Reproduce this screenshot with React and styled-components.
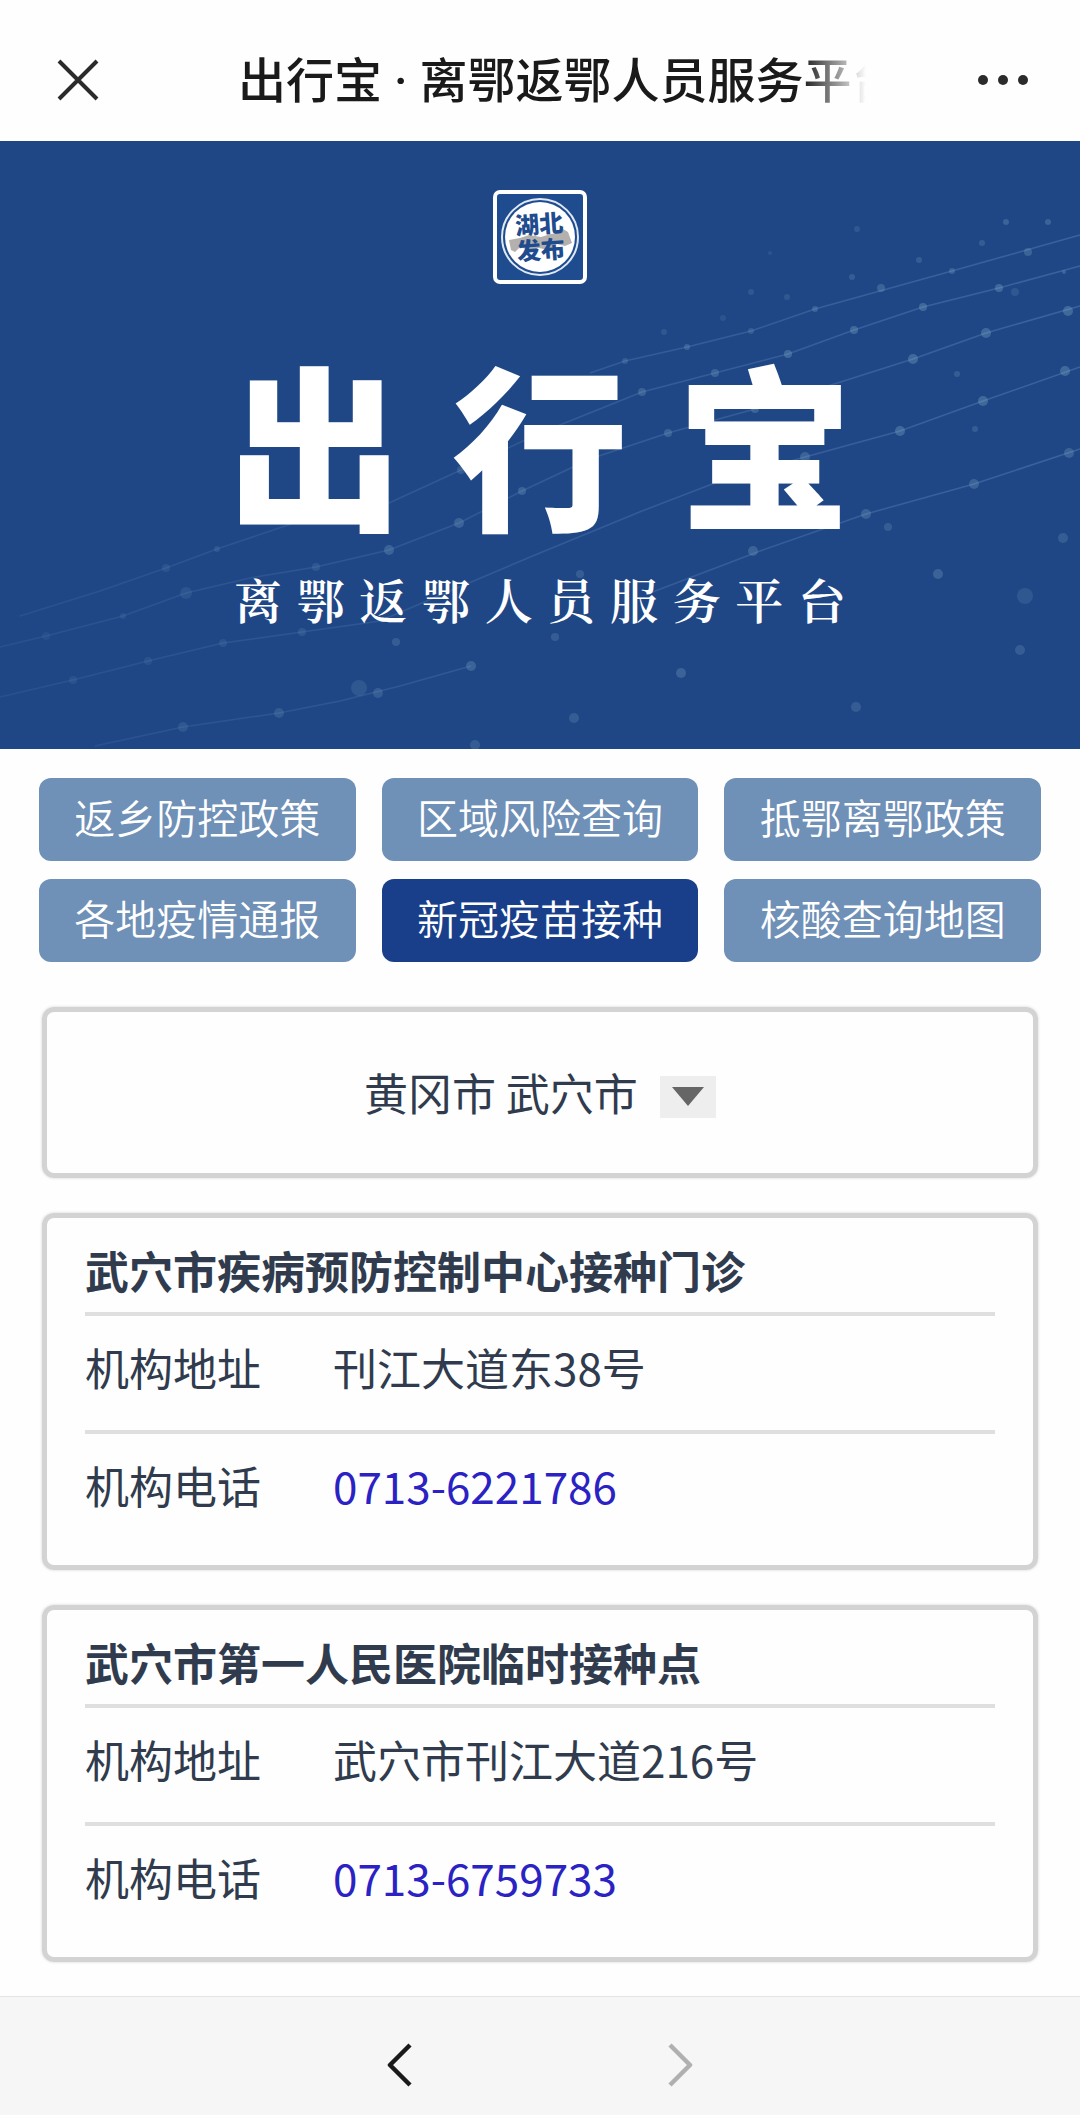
import { useState } from 'react';
import styled, { createGlobalStyle } from 'styled-components';

const menuItems = [
  '返乡防控政策',
  '区域风险查询',
  '抵鄂离鄂政策',
  '各地疫情通报',
  '新冠疫苗接种',
  '核酸查询地图',
];

const areas = ['黄冈市 武穴市', '黄冈市 黄州区', '黄冈市 麻城市'];

const clinics = [
  {
    name: '武穴市疾病预防控制中心接种门诊',
    address: '刊江大道东38号',
    phone: '0713-6221786',
  },
  {
    name: '武穴市第一人民医院临时接种点',
    address: '武穴市刊江大道216号',
    phone: '0713-6759733',
  },
];

export default function App() {
  const [selected, setSelected] = useState('新冠疫苗接种');
  const [area, setArea] = useState(areas[0]);

  return (
    <>
      <GlobalStyle />
      <Header>
        <IconButton type="button" aria-label="关闭">
          <CloseIcon />
        </IconButton>
        <PageTitle>出行宝 · 离鄂返鄂人员服务平台</PageTitle>
        <IconButton type="button" aria-label="更多">
          <MoreIcon />
        </IconButton>
      </Header>

      <main>
        <Banner>
          <Network />
          <Logo />
          <BannerTitle>出行宝</BannerTitle>
          <BannerSubtitle>离鄂返鄂人员服务平台</BannerSubtitle>
        </Banner>

        <Menu>
          {menuItems.map((item) => (
            <MenuButton
              key={item}
              type="button"
              $active={item === selected}
              onClick={() => setSelected(item)}
            >
              {item}
            </MenuButton>
          ))}
        </Menu>

        <CardList>
          <AreaCard>
            <AreaSelect
              id="area"
              aria-label="选择地区"
              value={area}
              onChange={(event) => setArea(event.target.value)}
            >
              {areas.map((name) => (
                <option key={name}>{name}</option>
              ))}
            </AreaSelect>
            <AreaArrow htmlFor="area">
              <svg width="32" height="20" viewBox="0 0 32 20" aria-hidden="true">
                <path d="M0 0H32L16 19Z" fill="#666" />
              </svg>
            </AreaArrow>
          </AreaCard>

          {clinics.map((clinic) => (
            <ClinicCard key={clinic.name} {...clinic} />
          ))}
        </CardList>
      </main>

      <BottomBar>
        <NavButton type="button" aria-label="后退">
          <ChevronIcon d="M23 3L3 23L23 43" />
        </NavButton>
        <NavButton type="button" aria-label="前进" disabled>
          <ChevronIcon d="M3 3L23 23L3 43" />
        </NavButton>
      </BottomBar>
    </>
  );
}

function ClinicCard({ name, address, phone }) {
  return (
    <Card>
      <ClinicName>{name}</ClinicName>
      <Details>
        <Row>
          <dt>机构地址</dt>
          <dd>{address}</dd>
        </Row>
        <Row>
          <dt>机构电话</dt>
          <dd>
            <a href={`tel:${phone}`}>{phone}</a>
          </dd>
        </Row>
      </Details>
    </Card>
  );
}

function CloseIcon() {
  return (
    <svg width="42" height="42" viewBox="0 0 42 42" aria-hidden="true">
      <path d="M2 2L40 40M40 2L2 40" fill="none" stroke="#2b2b2b" strokeWidth="4" />
    </svg>
  );
}

function MoreIcon() {
  return (
    <svg width="50" height="12" viewBox="0 0 50 12" fill="#2b2b2b" aria-hidden="true">
      <circle cx="5" cy="6" r="5" />
      <circle cx="25" cy="6" r="5" />
      <circle cx="45" cy="6" r="5" />
    </svg>
  );
}

function ChevronIcon({ d }) {
  return (
    <svg width="26" height="46" viewBox="0 0 26 46" aria-hidden="true">
      <path d={d} fill="none" stroke="currentColor" strokeWidth="4.5" strokeLinejoin="round" />
    </svg>
  );
}

function Logo() {
  return (
    <LogoSvg viewBox="0 0 94 94" role="img" aria-label="湖北发布">
      <rect x="2" y="2" width="90" height="90" rx="5" fill="#1f4c8e" stroke="#fff" strokeWidth="4" />
      <circle cx="47" cy="47" r="38" fill="none" stroke="#dfe8f5" strokeWidth="2" />
      <circle cx="47" cy="47" r="35" fill="#fff" />
      <path
        d="M16 50L27 48L36 45L48 47L58 44L66 43L70 39L75 42L79 53L72 56L64 54L56 60L46 58L36 60L27 57L22 62L18 60Z"
        fill="#b3b0ad"
      />
      <g fill="#1f4c8e" fontSize="24" fontWeight="900" textAnchor="middle" transform="rotate(-4 47 47)">
        <text x="47" y="43">湖北</text>
        <text x="47" y="69">发布</text>
      </g>
    </LogoSvg>
  );
}

const networkLines = [
  '0,506 46,495 123,475 186,452 250,437 316,426 389,409 459,382 522,350 590,318 668,292 755,268 850,238 913,218 986,192 1080,165',
  '389,362 461,329 540,292 642,251 715,232 788,213 854,189 923,166 999,147 1080,125',
  '0,556 73,539 148,520 223,502 302,491 380,480 450,450 535,414 642,370 720,340 805,316 900,290 983,260 1080,226',
  '95,605 183,586 279,572 340,560 400,545 471,525',
  '650,452 760,410 866,373 974,343 1080,308',
  '20,475 100,450 166,427 217,408 300,380',
  '590,232 625,220 687,206 751,190 815,168 952,130 1080,94',
];

// [x, y, radius, opacity]
const networkDots = [
  [1068, 170, 5, 0.3], [986, 192, 5, 0.3], [913, 218, 5, 0.3], [999, 147, 4, 0.3],
  [923, 166, 4, 0.3], [854, 189, 4, 0.3], [788, 213, 4, 0.3], [715, 232, 4, 0.25],
  [642, 251, 4, 0.25], [1065, 230, 5, 0.3], [983, 260, 5, 0.3], [900, 290, 5, 0.3],
  [805, 316, 5, 0.25], [668, 292, 4, 0.25], [755, 268, 4, 0.25], [1069, 312, 5, 0.25],
  [974, 343, 5, 0.25], [866, 373, 5, 0.25], [888, 386, 4, 0.2], [1063, 397, 5, 0.2],
  [938, 433, 5, 0.25], [1025, 455, 8, 0.15], [1020, 509, 5, 0.2], [856, 566, 5, 0.2],
  [753, 410, 5, 0.25], [681, 532, 5, 0.25], [574, 577, 5, 0.2], [580, 433, 4, 0.2],
  [952, 130, 3, 0.25], [1028, 111, 4, 0.25], [1048, 81, 3, 0.25], [815, 168, 3, 0.25],
  [881, 147, 4, 0.25], [751, 190, 3, 0.2], [687, 206, 3, 0.25], [625, 220, 3, 0.2],
  [664, 191, 3, 0.15], [957, 233, 3, 0.2], [975, 288, 3, 0.2], [555, 496, 4, 0.2],
  [852, 136, 3, 0.2], [1015, 151, 4, 0.15], [1064, 131, 2, 0.25], [1006, 81, 3, 0.25],
  [982, 102, 3, 0.2], [919, 119, 3, 0.2], [857, 88, 3, 0.15], [770, 112, 2, 0.12],
  [751, 151, 3, 0.15], [787, 156, 3, 0.15], [723, 177, 3, 0.12], [461, 329, 4, 0.2],
  [459, 382, 5, 0.25], [389, 409, 5, 0.25], [316, 426, 4, 0.15], [217, 408, 3, 0.15],
  [166, 427, 4, 0.12], [186, 452, 6, 0.12], [123, 475, 3, 0.1], [46, 495, 4, 0.08],
  [302, 491, 4, 0.15], [223, 502, 4, 0.12], [148, 520, 4, 0.1], [73, 539, 4, 0.1],
  [396, 501, 4, 0.2], [471, 525, 5, 0.25], [359, 547, 8, 0.15], [378, 552, 5, 0.2],
  [279, 572, 5, 0.18], [183, 586, 5, 0.15], [475, 604, 5, 0.2], [522, 350, 4, 0.25],
];

function Network() {
  return (
    <NetworkSvg viewBox="0 0 1080 608" preserveAspectRatio="xMidYMid slice" aria-hidden="true">
      <defs>
        <linearGradient id="line" gradientUnits="userSpaceOnUse" x1="0" y1="0" x2="1080" y2="0">
          <stop offset="0" stopColor="#7fa8d8" stopOpacity="0.1" />
          <stop offset="1" stopColor="#7fa8d8" stopOpacity="0.28" />
        </linearGradient>
      </defs>
      {networkLines.map((points) => (
        <polyline key={points} points={points} fill="none" stroke="url(#line)" strokeWidth="1.5" />
      ))}
      {networkDots.map(([x, y, r, opacity]) => (
        <circle key={`${x}-${y}`} cx={x} cy={y} r={r} fill="#8fb8cc" opacity={opacity} />
      ))}
    </NetworkSvg>
  );
}

const GlobalStyle = createGlobalStyle`
  * {
    box-sizing: border-box;
  }

  body {
    margin: 0;
    background-color: #fefefe;
    color: #303c4e;
    font-family: 'Noto Sans CJK SC', sans-serif;
  }

  button,
  select {
    font-family: inherit;
  }
`;

const Header = styled.header`
  display: flex;
  align-items: center;
  height: 141px;
  padding: 18px 52px 0 57px;
`;

const IconButton = styled.button`
  display: flex;
  padding: 0;
  border: none;
  background: none;
  cursor: pointer;
`;

const PageTitle = styled.div`
  flex: 1;
  min-width: 0;
  margin: 0 112px 0 139px;
  padding-top: 5px;
  overflow: hidden;
  white-space: nowrap;
  font-family: Roboto, 'Noto Sans CJK SC', sans-serif;
  font-size: 48px;
  font-weight: 500;
  line-height: 72px;
  color: #1a1a1a;
  mask-image: linear-gradient(to right, #000 calc(100% - 64px), transparent);
`;

const Banner = styled.section`
  position: relative;
  display: flex;
  flex-direction: column;
  align-items: center;
  padding: 49px 0 120px;
  background-color: #1f4786;
  color: #fff;
`;

const NetworkSvg = styled.svg`
  position: absolute;
  inset: 0;
  width: 100%;
  height: 100%;
`;

const LogoSvg = styled.svg`
  position: relative;
  width: 94px;
  height: 94px;
`;

const BannerTitle = styled.h1`
  position: relative;
  width: 626px;
  margin: 69px 0 0;
  font-size: 176px;
  font-weight: 900;
  line-height: 176px;
  text-align-last: justify;
`;

const BannerSubtitle = styled.p`
  position: relative;
  width: 612px;
  margin: 40px 0 0;
  font-family: 'Noto Serif CJK SC', 'Noto Sans CJK SC', serif;
  font-size: 48px;
  font-weight: 600;
  line-height: 60px;
  text-align-last: justify;
`;

const Menu = styled.nav`
  display: grid;
  grid-template-columns: repeat(3, 1fr);
  gap: 18px 26px;
  padding: 29px 39px 45px;
`;

const MenuButton = styled.button`
  height: 83px;
  padding: 0 0 7px;
  border: none;
  border-radius: 12px;
  background-color: ${(props) => (props.$active ? '#193f8a' : '#6f90b7')};
  color: #fff;
  font-size: 41px;
  font-weight: 350;
  cursor: pointer;
`;

const CardList = styled.div`
  display: flex;
  flex-direction: column;
  gap: 35px;
  padding: 0 42px 34px;
`;

const Card = styled.section`
  padding: 12px 38px 29px;
  border: 5px solid #d3d3d3;
  border-radius: 12px;
  box-shadow: 0 0 3px #d3d3d3;
`;

const AreaCard = styled(Card)`
  display: flex;
  align-items: center;
  justify-content: center;
  gap: 22px;
  height: 171px;
  padding: 8px 0 0;
`;

const AreaSelect = styled.select`
  appearance: none;
  padding: 0 0 10px;
  border: none;
  background: none;
  color: inherit;
  font-size: 44px;
  line-height: 66px;
`;

const AreaArrow = styled.label`
  display: flex;
  align-items: center;
  justify-content: center;
  width: 56px;
  height: 42px;
  background-color: #eee;
`;

const ClinicName = styled.h2`
  margin: 0;
  padding-bottom: 2px;
  border-bottom: 4px solid #e0dfe0;
  font-size: 44px;
  font-weight: 700;
  line-height: 80px;
`;

const Details = styled.dl`
  margin: 0;
`;

const Row = styled.div`
  display: flex;
  font-size: 44px;
  line-height: 102px;

  &:not(:last-child) {
    padding-bottom: 12px;
    border-bottom: 4px solid #dfdfdf;
  }

  dt {
    width: 248px;
  }

  dd {
    margin: 0;
  }

  a {
    color: #2b22c4;
    text-decoration: none;
  }
`;

const BottomBar = styled.nav`
  display: flex;
  justify-content: center;
  gap: 220px;
  padding: 36px 0 19px;
  border-top: 1px solid #e3e3e3;
  background-color: #f6f6f6;
`;

const NavButton = styled.button`
  display: flex;
  align-items: center;
  justify-content: center;
  width: 60px;
  height: 63px;
  padding: 0;
  border: none;
  background: none;
  color: ${(props) => (props.disabled ? '#b0b0b0' : '#1a1a1a')};
`;
